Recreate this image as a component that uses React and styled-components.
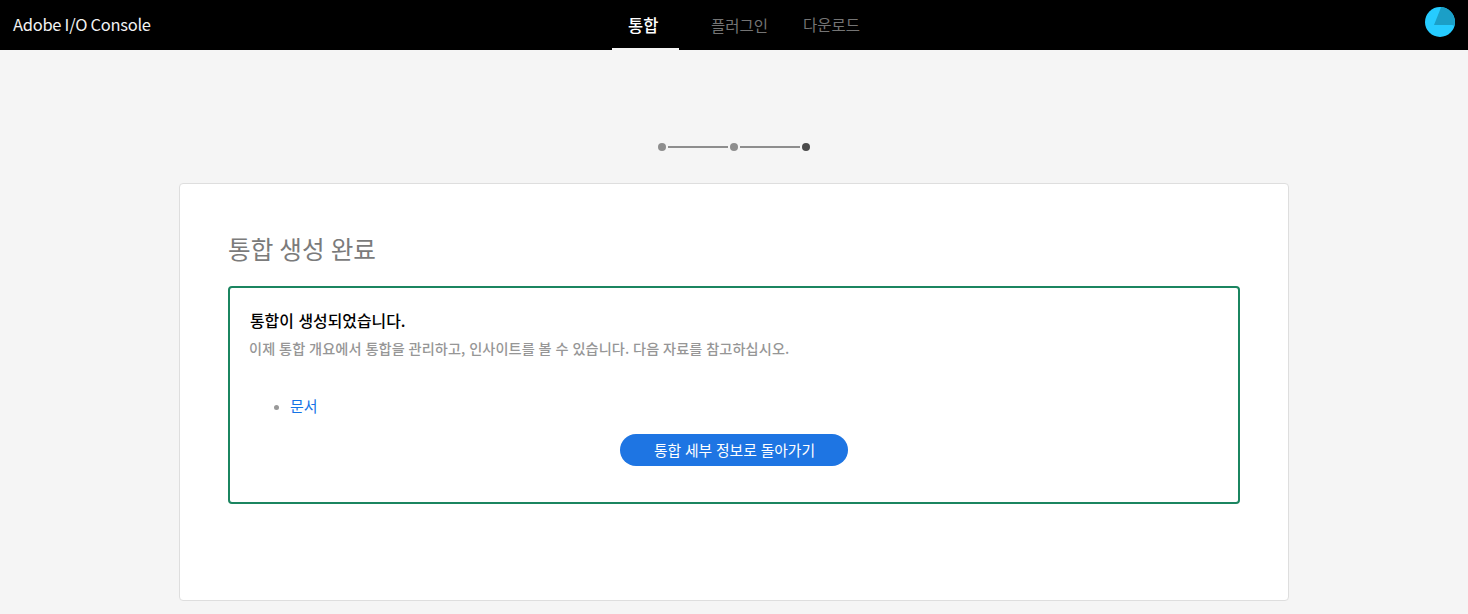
import React from 'react';
import styled, { createGlobalStyle } from 'styled-components';

const GlobalStyle = createGlobalStyle`
  * { box-sizing: border-box; }
  body {
    margin: 0;
    background: #f5f5f5;
    font-family: "Noto Sans CJK KR", "Noto Sans", sans-serif;
  }
`;

const Page = styled.div`
  height: 614px;
  display: flex;
  flex-direction: column;
  align-items: center;
  overflow: hidden;
`;

const Header = styled.header`
  width: 100%;
  height: 50px;
  flex: none;
  display: grid;
  grid-template-columns: 612px 1fr auto;
  background: #000;
`;

const Brand = styled.div`
  padding-left: 13px;
  font-size: 16.5px;
  line-height: 48px;
  letter-spacing: -0.28px;
  color: #f2f2f2;
`;

const Nav = styled.nav`
  display: flex;
  gap: 16px;
`;

const NavItem = styled.a`
  height: 50px;
  padding: 0 16px;
  font-size: ${(p) => (p.$active ? '16.5px' : '15.5px')};
  font-weight: ${(p) => (p.$active ? 500 : 400)};
  line-height: ${(p) => p.$line || 50}px;
  white-space: nowrap;
  color: ${(p) => (p.$active ? '#fff' : '#747474')};
  border-bottom: 2px solid ${(p) => (p.$active ? '#f5f5f5' : 'transparent')};
  width: ${(p) => p.$width}px;
`;

const Avatar = styled.svg`
  width: 30px;
  height: 30px;
  margin: 7px 13px 0 0;
`;

const Steps = styled.div`
  display: flex;
  align-items: center;
  gap: 2px;
  height: 8px;
  margin-top: 93px;
`;

const Dot = styled.span`
  width: 8px;
  height: 8px;
  border-radius: 50%;
  background: ${(p) => (p.$current ? '#4b4b4b' : '#8e8e8e')};
`;

const Line = styled.span`
  width: 60px;
  height: 2px;
  background: #8e8e8e;
`;

const Card = styled.main`
  width: 1110px;
  height: 418px;
  flex: none;
  margin-top: 32px;
  padding: 46px 48px 0;
  background: #fff;
  border: 1px solid #dedede;
  border-radius: 4px;
`;

const Title = styled.h1`
  margin: 0 0 20px;
  font-size: 24.6px;
  font-weight: 400;
  line-height: 36px;
  word-spacing: 0.6px;
  color: #7b7b7b;
`;

const Result = styled.section`
  height: 218px;
  padding: 20px 19px 0;
  display: flex;
  flex-direction: column;
  border: 2px solid #1b8560;
  border-radius: 4px;
`;

const ResultTitle = styled.h2`
  margin: 0 0 0 1px;
  font-size: 15.9px;
  font-weight: 500;
  line-height: 25px;
  word-spacing: 1px;
  color: #000;
`;

const Description = styled.p`
  margin: 5px 0 0;
  font-size: 14.2px;
  font-weight: 500;
  line-height: 20px;
  letter-spacing: 0.08px;
  word-spacing: 0.5px;
  color: #969696;
`;

const Resources = styled.ul`
  margin: 37px 0 0;
  padding: 0 0 0 25px;
  list-style: none;
`;

const Resource = styled.li`
  display: flex;
  align-items: center;
  gap: 11px;
  height: 22px;

  &::before {
    content: '';
    width: 5px;
    height: 5px;
    margin-top: 3px;
    border-radius: 50%;
    background: #999;
  }
`;

const Link = styled.a`
  font-size: 15px;
  line-height: 22px;
  color: #1473e6;
`;

const Button = styled.button`
  align-self: center;
  width: 228px;
  height: 32px;
  margin-top: 17px;
  padding: 0 0 0 1px;
  border: 0;
  border-radius: 16px;
  background: #1e75e3;
  color: #fff;
  font: 400 14.8px/32px "Noto Sans CJK KR", sans-serif;
  word-spacing: 0.5px;
`;

export default function App() {
  return (
    <Page>
      <GlobalStyle />
      <Header>
        <Brand>Adobe I/O Console</Brand>
        <Nav>
          <NavItem $active $width={67}>통합</NavItem>
          <NavItem $width={76}>플러그인</NavItem>
          <NavItem $width={90} $line={48}>다운로드</NavItem>
        </Nav>
        <Avatar viewBox="0 0 30 30">
          <circle cx="15" cy="15" r="15" fill="#26ccff" />
          <path d="M16.2 0.1A15 15 0 0 1 29.3 19.4Q28.5 18 27 18H9Z" fill="#1b9fc7" />
        </Avatar>
      </Header>
      <Steps>
        <Dot />
        <Line />
        <Dot />
        <Line />
        <Dot $current />
      </Steps>
      <Card>
        <Title>통합 생성 완료</Title>
        <Result>
          <ResultTitle>통합이 생성되었습니다.</ResultTitle>
          <Description>
            이제 통합 개요에서 통합을 관리하고, 인사이트를 볼 수 있습니다. 다음 자료를 참고하십시오.
          </Description>
          <Resources>
            <Resource>
              <Link>문서</Link>
            </Resource>
          </Resources>
          <Button>통합 세부 정보로 돌아가기</Button>
        </Result>
      </Card>
    </Page>
  );
}
